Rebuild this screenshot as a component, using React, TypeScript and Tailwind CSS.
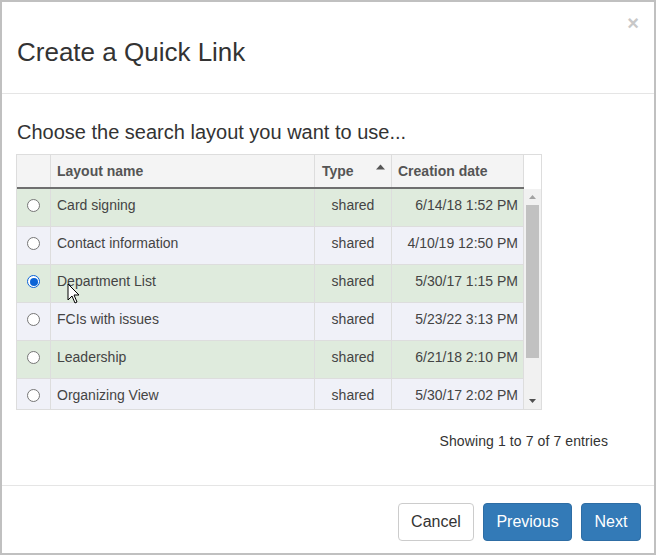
import React from "react";

const rows = [
  { name: "Card signing", type: "shared", date: "6/14/18 1:52 PM" },
  { name: "Contact information", type: "shared", date: "4/10/19 12:50 PM" },
  { name: "Department List", type: "shared", date: "5/30/17 1:15 PM", checked: true },
  { name: "FCIs with issues", type: "shared", date: "5/23/22 3:13 PM" },
  { name: "Leadership", type: "shared", date: "6/21/18 2:10 PM" },
  { name: "Organizing View", type: "shared", date: "5/30/17 2:02 PM" },
];

function Radio({ checked }: { checked?: boolean }) {
  if (checked) {
    return (
      <span className="w-[13px] h-[13px] rounded-full border border-[#0b63d6] bg-white flex items-center justify-center">
        <span className="w-[8px] h-[8px] rounded-full bg-[#0b63d6]" />
      </span>
    );
  }
  return <span className="w-[13px] h-[13px] rounded-full border border-[#767676] bg-white" />;
}

export default function App() {
  return (
    <div
      className="w-[656px] h-[555px] border-2 border-[#c0c0c0] bg-white text-[#333] relative overflow-hidden"
      style={{ fontFamily: '"Liberation Sans", Arial, sans-serif' }}
    >
      {/* Header */}
      <div className="h-[92px] border-b border-[#e5e5e5] relative flex items-center pl-[15px] pt-[8px]">
        <h1 className="text-[26px] leading-[30px] text-[#333] font-normal">Create a Quick Link</h1>
        <span className="absolute right-[15px] top-[9px] text-[20px] font-bold text-[#c8c8c8] leading-[24px]">×</span>
      </div>

      {/* Body */}
      <div className="h-[391px] px-[14px] pt-[28px]">
        <p className="text-[20px] leading-[20px] text-[#333] pl-[1px]">Choose the search layout you want to use...</p>

        <div className="mt-[12px] w-[526px] h-[256px] border border-[#dddddd] flex">
          <div className="w-[507px] flex flex-col">
            {/* table header */}
            <div className="h-[34px] flex bg-[#f4f4f4] border-b-2 border-[#6f6f6f] text-[14px] font-bold text-[#555]">
              <div className="w-[34px] border-r border-[#dddddd]" />
              <div className="w-[264px] border-r border-[#dddddd] flex items-center pl-[6px]">Layout name</div>
              <div className="w-[77px] border-r border-[#dddddd] flex items-center pl-[7px] relative">
                Type
                <svg className="absolute right-[6px] top-[9px]" width="9" height="6" viewBox="0 0 9 6">
                  <path d="M0 5.5 L4.5 0.5 L9 5.5 Z" fill="#555" />
                </svg>
              </div>
              <div className="w-[132px] border-r border-[#dddddd] flex items-center pl-[6px]">Creation date</div>
            </div>
            {/* body rows */}
            <div className="h-[220px] overflow-hidden">
              {rows.map((r, i) => (
                <div
                  key={r.name}
                  className={`h-[38px] flex border-b border-[#dddddd] text-[14px] leading-[20px] text-[#444] ${
                    i % 2 === 0 ? "bg-[#dfebdd]" : "bg-[#f0f1f8]"
                  }`}
                >
                  <div className="w-[34px] border-r border-[#dddddd] flex justify-center pt-[10px]">
                    <Radio checked={r.checked} />
                  </div>
                  <div className="w-[264px] border-r border-[#dddddd] pl-[6px] pt-[6px]">{r.name}</div>
                  <div className="w-[77px] border-r border-[#dddddd] text-center pt-[6px]">{r.type}</div>
                  <div className="w-[132px] border-r border-[#dddddd] text-right pr-[5px] pt-[6px]">{r.date}</div>
                </div>
              ))}
            </div>
          </div>
          {/* scrollbar column */}
          <div className="w-[17px] flex flex-col">
            <div className="h-[34px] bg-white" />
            <div className="h-[220px] bg-[#f1f1f1] flex flex-col items-center">
              <div className="h-[16px] flex items-center justify-center">
                <svg width="7" height="4" viewBox="0 0 7 4">
                  <path d="M0 4 L3.5 0 L7 4 Z" fill="#a3a3a3" />
                </svg>
              </div>
              <div className="w-[13px] h-[153px] bg-[#c1c1c1]" />
              <div className="flex-1" />
              <div className="h-[16px] flex items-center justify-center">
                <svg width="7" height="4" viewBox="0 0 7 4">
                  <path d="M0 0 L7 0 L3.5 4 Z" fill="#505050" />
                </svg>
              </div>
            </div>
          </div>
        </div>

        <p className="mt-[21px] text-[14px] leading-[20px] text-[#333] text-right pr-[32px] tracking-[0.1px]">
          Showing 1 to 7 of 7 entries
        </p>
      </div>

      {/* Footer */}
      <div className="border-t border-[#e5e5e5] pt-[17px] pr-[13px] flex justify-end gap-[9px]">
        <button className="w-[76px] h-[38px] rounded-[4px] border border-[#cccccc] bg-white text-[16px] text-[#333]">
          Cancel
        </button>
        <button className="w-[89px] h-[38px] rounded-[4px] border border-[#2e6da4] bg-[#337ab7] text-[16px] text-white">
          Previous
        </button>
        <button className="w-[60px] h-[38px] rounded-[4px] border border-[#2e6da4] bg-[#337ab7] text-[16px] text-white">
          Next
        </button>
      </div>

      {/* mouse cursor */}
      <svg className="absolute left-[65px] top-[281px]" width="13" height="21" viewBox="0 0 13 21">
        <path d="M1 1 L1 17 L5 13 L8 20 L10 19 L7 12 L12 12 Z" fill="white" stroke="black" strokeWidth="1" strokeLinejoin="miter" />
      </svg>
    </div>
  );
}
